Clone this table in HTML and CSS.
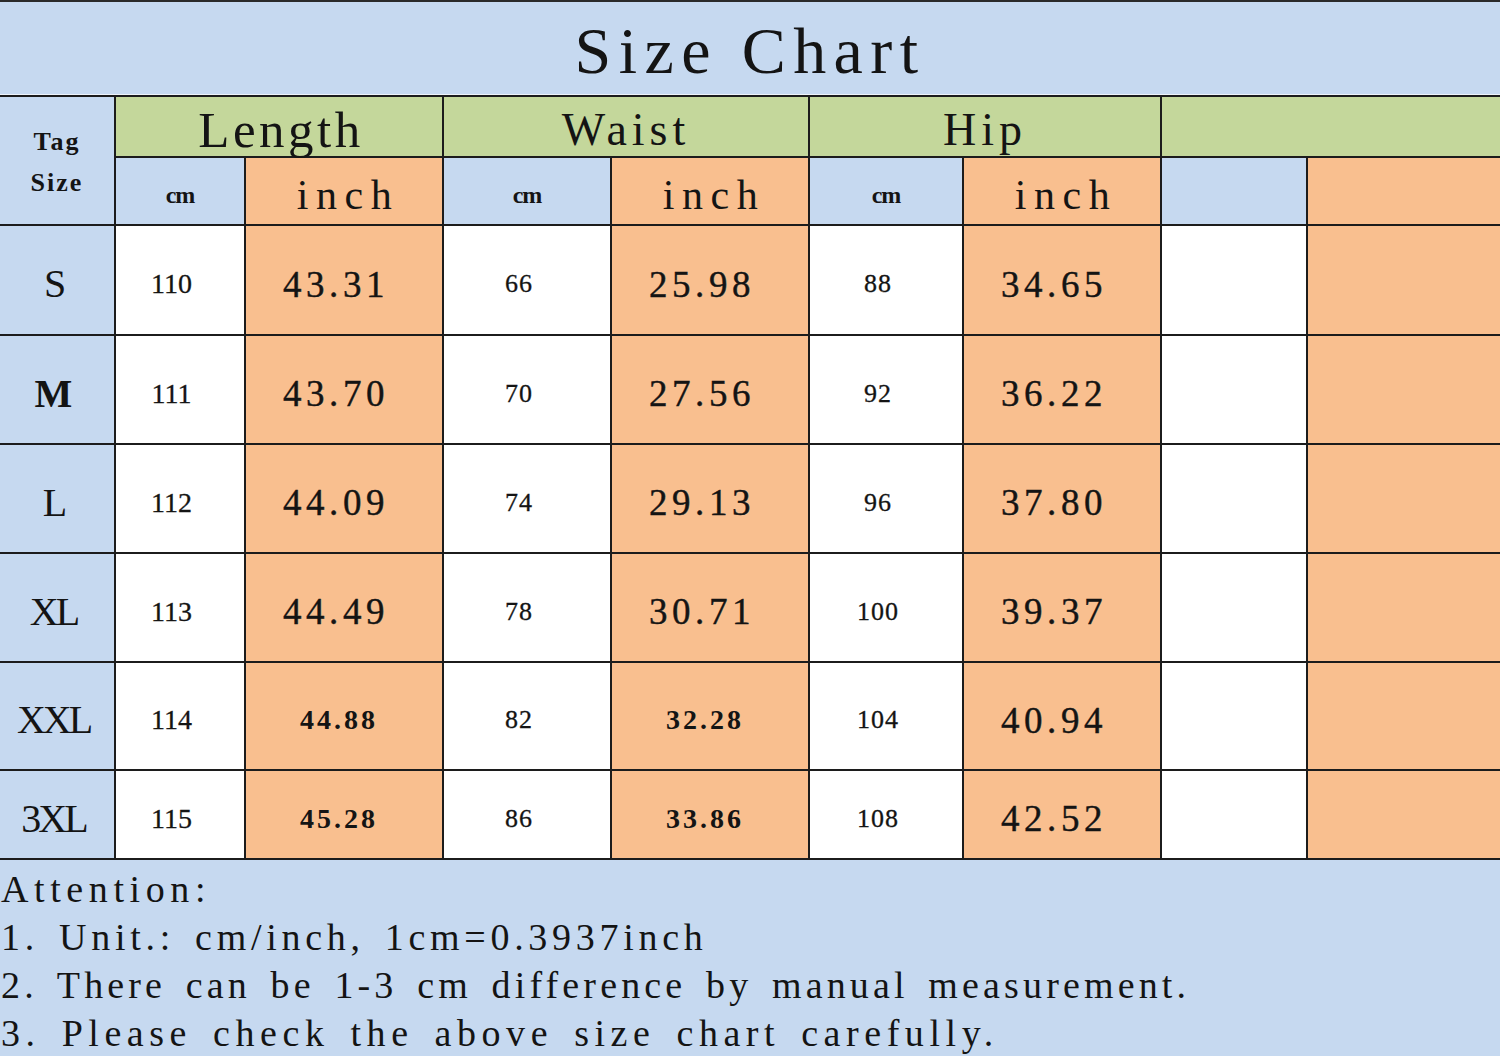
FILE: index.html
```html
<!DOCTYPE html>
<html lang="en">
<head>
<meta charset="utf-8">
<title>Size Chart</title>
<link rel="stylesheet" href="styles.css">
</head>
<body>
<div class="page">
  <div class="title">Size Chart</div>
  <div class="chart">
    <div class="cell blue tag"><span>Tag</span><span>Size</span></div>
    <div class="cell green group group-length span2">Length</div>
    <div class="cell green group span2">Waist</div>
    <div class="cell green group span2">Hip</div>
    <div class="cell green group span2"></div>

    <div class="cell blue unit cm">cm</div>
    <div class="cell orange unit inch">inch</div>
    <div class="cell blue unit cm">cm</div>
    <div class="cell orange unit inch">inch</div>
    <div class="cell blue unit cm">cm</div>
    <div class="cell orange unit inch">inch</div>
    <div class="cell blue unit"></div>
    <div class="cell orange unit"></div>

    <div class="cell blue size">S</div>
    <div class="cell white num">110</div>
    <div class="cell orange big">43.31</div>
    <div class="cell white num sm">66</div>
    <div class="cell orange big">25.98</div>
    <div class="cell white num sm">88</div>
    <div class="cell orange big">34.65</div>
    <div class="cell white"></div>
    <div class="cell orange"></div>

    <div class="cell blue size bold">M</div>
    <div class="cell white num">111</div>
    <div class="cell orange big">43.70</div>
    <div class="cell white num sm">70</div>
    <div class="cell orange big">27.56</div>
    <div class="cell white num sm">92</div>
    <div class="cell orange big">36.22</div>
    <div class="cell white"></div>
    <div class="cell orange"></div>

    <div class="cell blue size">L</div>
    <div class="cell white num">112</div>
    <div class="cell orange big">44.09</div>
    <div class="cell white num sm">74</div>
    <div class="cell orange big">29.13</div>
    <div class="cell white num sm">96</div>
    <div class="cell orange big">37.80</div>
    <div class="cell white"></div>
    <div class="cell orange"></div>

    <div class="cell blue size">XL</div>
    <div class="cell white num">113</div>
    <div class="cell orange big">44.49</div>
    <div class="cell white num sm">78</div>
    <div class="cell orange big">30.71</div>
    <div class="cell white num sm">100</div>
    <div class="cell orange big">39.37</div>
    <div class="cell white"></div>
    <div class="cell orange"></div>

    <div class="cell blue size">XXL</div>
    <div class="cell white num">114</div>
    <div class="cell orange small">44.88</div>
    <div class="cell white num sm">82</div>
    <div class="cell orange small">32.28</div>
    <div class="cell white num sm">104</div>
    <div class="cell orange big">40.94</div>
    <div class="cell white"></div>
    <div class="cell orange"></div>

    <div class="cell blue size">3XL</div>
    <div class="cell white num">115</div>
    <div class="cell orange small">45.28</div>
    <div class="cell white num sm">86</div>
    <div class="cell orange small">33.86</div>
    <div class="cell white num sm">108</div>
    <div class="cell orange big">42.52</div>
    <div class="cell white"></div>
    <div class="cell orange"></div>
  </div>
  <div class="notes">
    <p class="note-head">Attention:</p>
    <p class="note-1">1. Unit.: cm/inch, 1cm=0.3937inch</p>
    <p class="note-2">2. There can be 1-3 cm difference by manual measurement.</p>
    <p class="note-3">3. Please check the above size chart carefully.</p>
  </div>
</div>
</body>
</html>
```

FILE: styles.css
```css
html, body {
  margin: 0;
  padding: 0;
}

body {
  background: #c6d9f0;
  color: #141414;
  font-family: "Liberation Serif", "Times New Roman", serif;
}

.page {
  width: 1500px;
  height: 1056px;
  overflow: hidden;
}

.title {
  box-sizing: border-box;
  height: 95px;
  border-top: 2px solid #2a2a2a;
  border-bottom: 1px solid #eef3fa;
  padding-top: 5px;
  font-size: 66px;
  line-height: 87px;
  letter-spacing: 7.4px;
  text-align: center;
}

.chart {
  display: grid;
  grid-template-columns: 114px 128px 196px 166px 196px 152px 196px 144px 192px;
  grid-template-rows: 59px 66px 108px 107px 107px 107px 106px 87px;
  gap: 2px;
  padding: 2px 0;
  background: #1c1c1c;
}

.cell {
  display: flex;
  align-items: center;
  justify-content: center;
  line-height: 1;
  box-sizing: border-box;
  padding-top: 8px;
  white-space: nowrap;
}

.blue { background: #c6d9f0; }
.green { background: #c4d79b; }
.orange { background: #f9bf8f; }
.white { background: #ffffff; }

.span2 { grid-column: span 2; }

.tag {
  grid-row: span 2;
  flex-direction: column;
  padding-top: 3px;
  font-size: 26px;
  font-weight: bold;
  letter-spacing: 2px;
  line-height: 41px;
}

.group {
  padding-top: 7px;
  font-size: 46px;
  letter-spacing: 5px;
}

.group-length {
  font-size: 51px;
  letter-spacing: 3.5px;
  padding-left: 4px;
}

.unit {
  padding-top: 8px;
}

.unit.cm {
  font-size: 24px;
  font-weight: bold;
  letter-spacing: -1px;
}

.unit.inch {
  font-size: 42px;
  letter-spacing: 7.5px;
  padding-left: 8px;
}

.size {
  font-size: 40px;
  letter-spacing: -3px;
  padding-right: 7px;
}

.size.bold {
  font-weight: bold;
  letter-spacing: 0;
}

.num {
  font-size: 28px;
  padding-right: 17px;
  -webkit-text-stroke: 0.3px #141414;
}

.num.sm {
  font-size: 26px;
  letter-spacing: 1px;
  padding-right: 16px;
}

.big {
  font-size: 37px;
  letter-spacing: 4.6px;
  padding-right: 16px;
  -webkit-text-stroke: 0.4px #141414;
}

.small {
  font-size: 28px;
  font-weight: bold;
  letter-spacing: 3px;
  padding-right: 10px;
}

.notes {
  padding: 5px 0 0 1px;
  font-size: 38px;
  line-height: 48px;
  letter-spacing: 4.3px;
  word-spacing: 6px;
  white-space: nowrap;
}

.notes p {
  margin: 0;
}

.note-head { letter-spacing: 5.6px; }
.note-1 { letter-spacing: 4.7px; }
.note-2 { letter-spacing: 4.15px; }
.note-3 { letter-spacing: 5.55px; }
```
